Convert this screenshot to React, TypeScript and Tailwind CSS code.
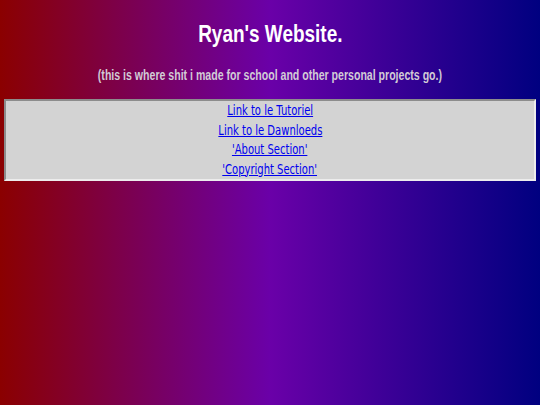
export default function App() {
  const links = ["Link to le Tutoriel", "Link to le Dawnloeds", "'About Section'", "'Copyright Section'"];
  return (
    <div className="min-h-[405px] w-full bg-linear-to-r/srgb from-[#8b0000] via-[#6a00a8] to-[#000080] pt-[20px] px-[4px]">
      <h1 className="text-center text-white font-bold text-[24px] leading-[28px] font-['Liberation_Sans',Arial,sans-serif]">
        <span className="inline-block scale-x-[0.79]">Ryan's Website.</span>
      </h1>
      <p className="mt-[18px] text-center text-[#d2cbd6] font-bold text-[14px] leading-[18px] font-['Liberation_Sans',Arial,sans-serif]">
        <span className="inline-block scale-x-[0.755] whitespace-nowrap">
          (this is where shit i made for school and other personal projects go.)
        </span>
      </p>
      <div className="mt-[15px] bg-[#d3d3d3] border-2 border-t-[#8c8c8c] border-l-[#8c8c8c] border-b-[#ececec] border-r-[#ececec] flex flex-col items-center">
        {links.map((l) => (
          <a
            key={l}
            href="#"
            className="inline-block scale-x-[0.69] text-[#0000ee] underline text-[14.5px] leading-[19.5px] font-['Comic_Sans_MS','DejaVu_Sans',cursive]"
          >
            {l}
          </a>
        ))}
      </div>
    </div>
  );
}
